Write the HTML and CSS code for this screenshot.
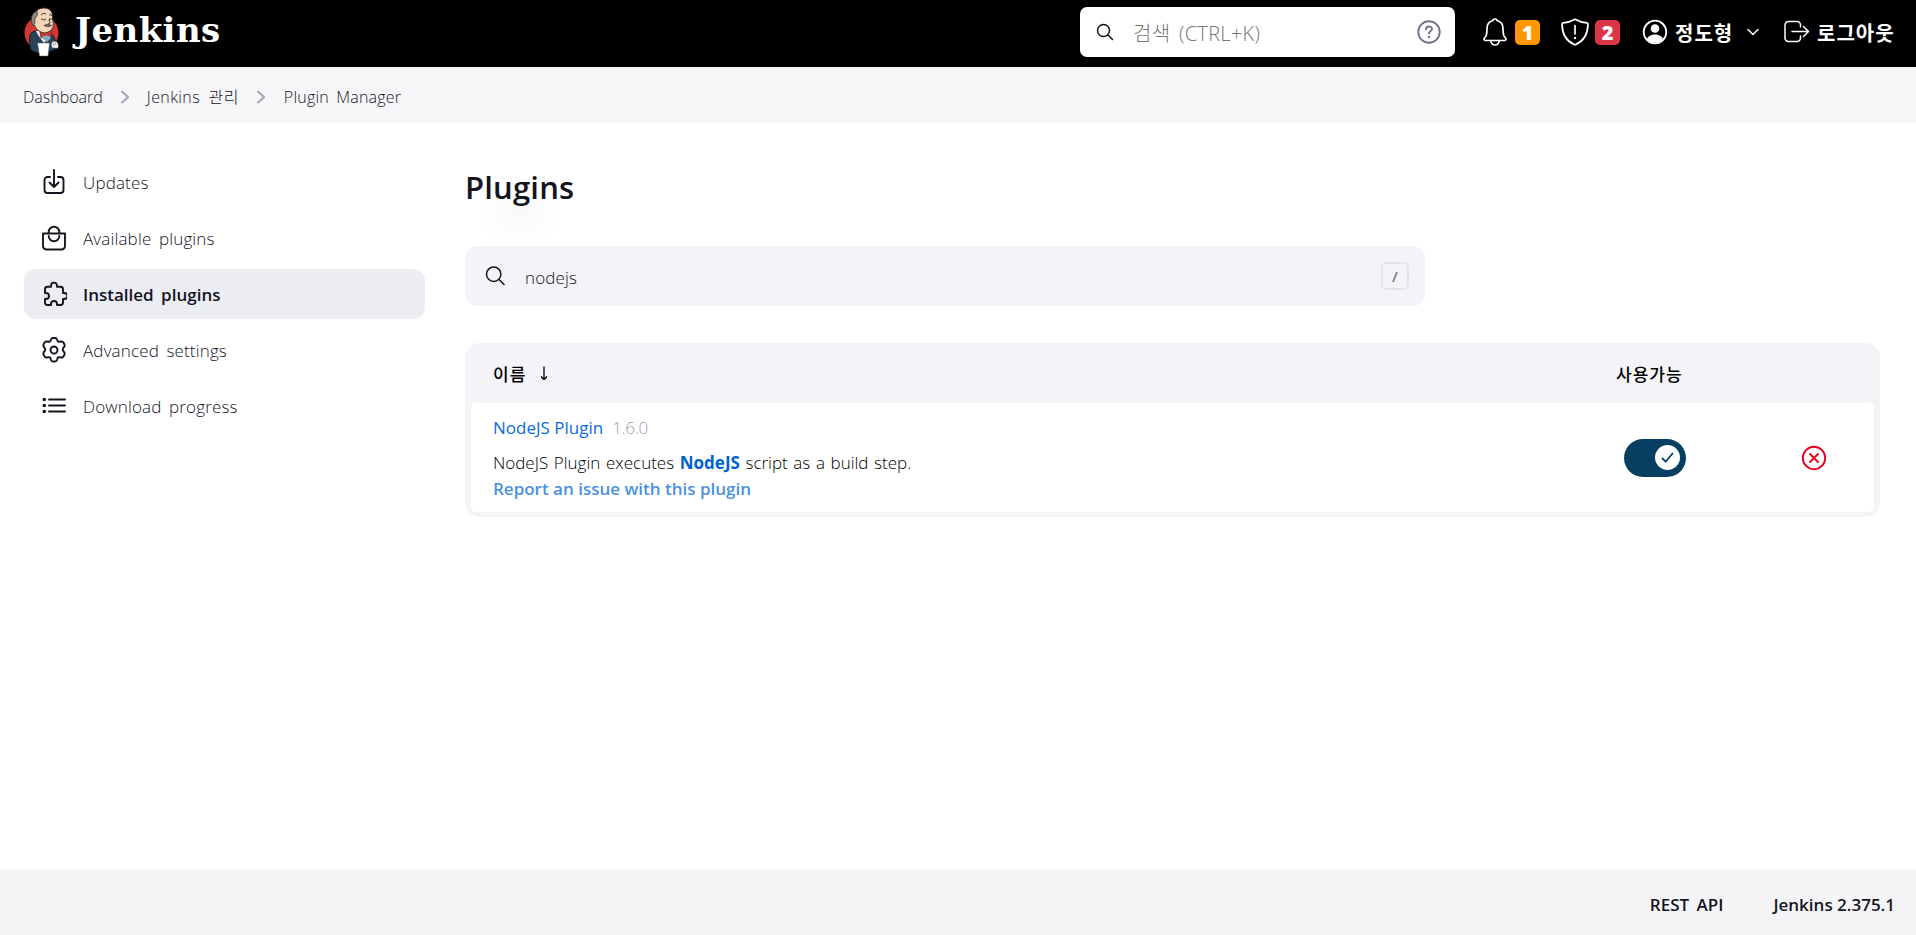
FILE: index.html
```html
<!DOCTYPE html>
<html lang="ko">
<head>
<meta charset="utf-8">
<title>Plugins - Jenkins</title>
<link rel="stylesheet" href="styles.css">
</head>
<body>
<header class="header">
  <a class="brand">
    <svg class="brand-logo" width="36" height="50" viewBox="0 0 36 50">
      <ellipse cx="17.500" cy="26" rx="17" ry="17" fill="#d33833"/>
      <path d="M7 26 C4 30 6 42 7.500 43 C12 47 25 46 31 42 L33 36 L28 27 L19 24 L11 24Z" fill="#284456" stroke="#172532" stroke-width="1"/>
      <path d="M12 24 L14 28 L20 36 L27 28 L25 23Z" fill="#f3f3ef"/>
      <path d="M9 11 C10 4 15 1 20 1 C27 1 29 6 28.500 12 C30.500 18 29 24 23 25.500 C18 27 12 23 11 19 C8 18 8 13 9 11Z" fill="#f0d6b7" stroke="#302b29" stroke-width=".9"/>
      <path d="M13 4 C7 6 6 13 9 19 C11 18 11 14 11 11 C13 10 14 7 13 4Z" fill="#8e8983" stroke="#302b29" stroke-width=".7"/>
      <path d="M17 8 Q19 5 22 7 M25 8 Q27 7 28 9 M17 12 Q20 14 22 12 M25 12 L28 12 M25 12 L26 16 L24 17" fill="none" stroke="#302b29" stroke-width=".9"/>
      <path d="M20 18.500 Q24 16 27.500 18.500 Q24 21 20 18.500Z" fill="#8e8983" stroke="#302b29" stroke-width=".8"/>
      <path d="M16 25 L21 27 L27 24 L27.500 29 L22 28 L17 31Z" fill="#d33833" stroke="#81201d" stroke-width=".8"/>
      <path d="M18 31 L23 35 L27 31 L25 29 L19 29Z" fill="#83aabd"/>
      <path d="M13.500 36 L25.500 36 L24 49 L15.500 49Z" fill="#fff" stroke="#53636b" stroke-width=".5"/>
      <path d="M27 38 C27 34 31 33 33 35 C35 37 35 41 33 41.500 L28 41Z" fill="#f3f3ef" stroke="#302b29" stroke-width=".7"/>
      <path d="M29 36 L30 39 M31 35 L32 38" stroke="#888" stroke-width=".7"/>
    </svg>
    <span class="brand-name">Jenkins</span>
  </a>
  <div class="top-search">
    <svg class="top-search-icon" width="18" height="18" viewBox="0 0 18 18" fill="none" stroke="#14141f" stroke-width="1.500" stroke-linecap="round"><circle cx="7.500" cy="7.500" r="6"/><path d="M12 12l4.500 4.500"/></svg>
    <span class="top-search-text">검색 (CTRL+K)</span>
    <svg width="24" height="24" viewBox="0 0 24 24" fill="none" stroke="#73738c" stroke-width="1.900"><circle cx="12" cy="12" r="10.700"/><path d="M9 9.500c0-4 6-4 6-.5 0 2-3 2.200-3 4.500" stroke-linecap="round"/><circle cx="12" cy="17" r="1.200" fill="#73738c" stroke="none"/></svg>
  </div>
  <a class="notice">
    <svg width="24" height="28" viewBox="0 0 24 28" fill="none" stroke="#fff" stroke-width="1.700" stroke-linejoin="round" stroke-linecap="round"><path d="M10 2.500c0-2 4-2 4 0 4 1 6 4 6 8 0 7 1 8 2.500 9.500 1 1.200.3 2.500-1 2.500h-19c-1.300 0-2-1.300-1-2.500C3 18.500 4 17.500 4 10.500c0-4 2-7 6-8Z"/><path d="M8 22.500v.5a4 4 0 0 0 8 0v-.5"/></svg>
    <span class="badge badge-orange">1</span>
  </a>
  <a class="notice notice-shield">
    <svg width="28" height="28" viewBox="0 0 28 28" fill="none" stroke="#fff" stroke-width="1.700" stroke-linejoin="round" stroke-linecap="round"><path d="M14 1.200c4 2.300 8 3.300 12 3.700 1 .1 1 .6 1 1.500-.3 10-4 16.500-12 20-1 .4-1 .4-2 0C5 22.900 1.300 16.400 1 6.400c0-.9 0-1.400 1-1.500C6 4.500 10 3.500 14 1.200Z"/><path d="M14 7.500v8.500"/><circle cx="14" cy="20" r="1.200" fill="#fff" stroke="none"/></svg>
    <span class="badge badge-red">2</span>
  </a>
  <a class="user">
    <svg width="26" height="26" viewBox="0 0 26 26"><circle cx="13" cy="13" r="11.300" fill="none" stroke="#fff" stroke-width="1.800"/><circle cx="13" cy="9.500" r="4.300" fill="#fff"/><path d="M5 20c2-6 14-6 16 0-4 5-12 5-16 0Z" fill="#fff"/></svg>
    <span class="user-name">정도형</span>
    <svg width="14" height="14" viewBox="0 0 14 14" fill="none" stroke="#fff" stroke-width="1.500" stroke-linecap="round" stroke-linejoin="round"><path d="M2 4.500l5 5 5-5"/></svg>
  </a>
  <a class="logout">
    <svg width="26" height="24" viewBox="0 0 26 24" fill="none" stroke="#fff" stroke-width="1.500" stroke-linecap="round" stroke-linejoin="round"><path d="M16.500 7V5a3.500 3.500 0 0 0-3.500-3.500H4.500A3.500 3.500 0 0 0 1 5v13a3.500 3.500 0 0 0 3.500 3.500H13a3.500 3.500 0 0 0 3.500-3.500v-2M8 11.500h16M19.500 6.500l5 5-5 5"/></svg>
    <span class="logout-text">로그아웃</span>
  </a>
</header>
<nav class="crumbs">
  <a class="crumb-dash">Dashboard</a>
  <svg width="10" height="16" viewBox="0 0 10 16" fill="none" stroke="#a5a5ba" stroke-width="2"><path d="M1.500 2l6.500 6-6.500 6"/></svg>
  <a class="crumb-manage">Jenkins 관리</a>
  <svg width="10" height="16" viewBox="0 0 10 16" fill="none" stroke="#a5a5ba" stroke-width="2"><path d="M1.500 2l6.500 6-6.500 6"/></svg>
  <a class="crumb-plugin">Plugin Manager</a>
</nav>
<div class="page">
  <aside class="side">
    <a class="task"><svg class="task-icon" viewBox="0 0 26 26"><path d="M9 8H6.500a3 3 0 0 0-3 3v10a3 3 0 0 0 3 3h13a3 3 0 0 0 3-3V11a3 3 0 0 0-3-3H17M13 1v17M8.500 13.500L13 18l4.500-4.500"/></svg><span>Updates</span></a>
    <a class="task"><svg class="task-icon" viewBox="0 0 26 26"><path d="M2 8.500h22V21a3.500 3.500 0 0 1-3.500 3.500h-15A3.500 3.500 0 0 1 2 21ZM7.700 8.500V7a5.300 5.300 0 0 1 10.600 0v1.500M7.700 11a5.300 5.300 0 0 0 10.600 0"/></svg><span>Available plugins</span></a>
    <a class="task task-active"><svg class="task-icon" viewBox="0 0 26 26"><path d="M10 5.800V5c0-4.500 6-4.500 6 0v.8h3.500a2.500 2.500 0 0 1 2.500 2.500V12h1c4.500 0 4.500 6 0 6h-1v3.500a2.500 2.500 0 0 1-2.500 2.500H16v-1c0-4-6-4-6 0v1H6.500A2.500 2.500 0 0 1 4 21.500V18h1c4 0 4-6 0-6H4V8.300a2.500 2.500 0 0 1 2.500-2.500Z"/></svg><span>Installed plugins</span></a>
    <a class="task"><svg class="task-icon" viewBox="0 0 26 26"><path d="M10 2.500q.5-1.500 2-1.500h2q1.500 0 2 1.500l.6 1.500q.5 1 1.800.8l1.800-.3q1.500-.2 2.200 1l1 1.700q.8 1.300-.1 2.500l-1.100 1.400q-.9 1.400 0 2.800l1.100 1.400q.9 1.200.1 2.500l-1 1.700q-.7 1.200-2.200 1l-1.800-.3q-1.300-.2-1.800.8l-.6 2q-.5 1.500-2 1.500h-2q-1.500 0-2-1.500l-.6-2q-.5-1-1.800-.8l-1.800.3q-1.500.2-2.200-1l-1-1.700q-.8-1.300.1-2.500l1.100-1.400q.9-1.400 0-2.800L2.700 9.700q-.9-1.200-.1-2.500l1-1.700q.7-1.200 2.200-1l1.800.3q1.300.2 1.800-.8Z"/><circle cx="13" cy="13" r="3.500"/></svg><span>Advanced settings</span></a>
    <a class="task"><svg class="task-icon" viewBox="0 0 26 26"><path d="M8 6.500h16M8 12.500h16M8 18.500h16"/><g fill="#14141f" stroke="none"><circle cx="3.300" cy="6.500" r="1.800"/><circle cx="3.300" cy="12.500" r="1.800"/><circle cx="3.300" cy="18.500" r="1.800"/></g></svg><span>Download progress</span></a>
  </aside>
  <main class="main">
    <h1 class="title">Plugins</h1>
    <div class="filter">
      <svg width="22" height="22" viewBox="0 0 22 22" fill="none" stroke="#14141f" stroke-width="1.500" stroke-linecap="round"><circle cx="8.700" cy="9.200" r="7.200"/><path d="M14 14.500l5 5"/></svg>
      <span class="filter-text">nodejs</span>
      <kbd class="key">/</kbd>
    </div>
    <section class="table">
      <div class="row head">
        <div class="head-name">이름<svg width="10" height="16" viewBox="0 0 10 16" fill="none" stroke="#000" stroke-width="1.300"><path d="M5 1.500v13M2 11.500l3 3 3-3"/></svg></div>
        <div class="head-enabled">사용가능</div>
        <div></div>
      </div>
      <div class="row body">
        <div class="info">
          <div class="plugin"><a class="plugin-link">NodeJS Plugin</a><span class="version">1.6.0</span></div>
          <div class="desc">NodeJS Plugin executes <b class="match">NodeJS</b> script as a build step.</div>
          <a class="report">Report an issue with this plugin</a>
        </div>
        <div class="toggle"><span class="knob"><svg width="25" height="25" viewBox="0 0 25 25" fill="none" stroke="#063f61" stroke-width="1.800" stroke-linecap="round" stroke-linejoin="round"><path d="M7.500 13.500l3.200 3.200 6.800-8.200"/></svg></span></div>
        <svg class="remove" width="26" height="26" viewBox="0 0 26 26" fill="none" stroke="#e6001f" stroke-width="1.900" stroke-linecap="round"><circle cx="13" cy="13" r="11.200"/><path d="M9 9l8 8M17 9l-8 8"/></svg>
      </div>
    </section>
  </main>
</div>
<footer class="footer"><a class="rest">REST API</a><a class="jver">Jenkins 2.375.1</a></footer>
</body>
</html>
```
FILE: styles.css
```css
* { box-sizing: border-box; }
body { margin: 0; height: 935px; display: flex; flex-direction: column; background: #fff; color: #14141f; font-family: "Open Sans", "Noto Sans CJK KR", sans-serif; font-size: 17px; white-space: nowrap; overflow: hidden; }
svg { display: block; flex: none; }
.header { height: 67px; flex: none; background: #000; display: flex; align-items: center; padding: 0 20px 3px 24px; color: #fff; }
.brand { display: flex; align-items: center; width: 1056px; }
.brand-name { font: bold 34px/50px "DejaVu Serif", serif; letter-spacing: .4px; margin: -4px 0 0 15px; }
.top-search { width: 375px; height: 50px; border-radius: 7px; background: #fff; display: flex; align-items: center; padding: 0 14px 0 16px; }
.top-search-text { flex: 1; margin-left: 19px; color: #757575; font-size: 20px; font-weight: 300; letter-spacing: .3px; word-spacing: 3px; }
.notice { display: flex; align-items: center; gap: 8px; margin-left: 28px; }
.notice-shield { margin-left: 21px; gap: 6px; }
.badge { width: 25px; height: 25px; border-radius: 5px; font-size: 20px; line-height: 26px; font-weight: 800; text-align: center; }
.badge-orange { background: #ff9800; }
.badge-red { background: #dc3545; }
.user { display: flex; align-items: center; margin-left: 22px; font-size: 20px; font-weight: 700; letter-spacing: 1px; }
.user-name { width: 59px; margin: 0 12px 0 7px; }
.logout { display: flex; align-items: center; margin-left: 24px; font-size: 20px; font-weight: 700; letter-spacing: 1px; }
.logout-text { margin-left: 7px; }
.crumbs { height: 56px; flex: none; background: #f6f6f8; display: flex; align-items: center; padding: 4px 23px 0; font-size: 16px; line-height: 24px; font-weight: 300; }
.crumbs svg { margin: 0 17px; }
.crumb-manage { letter-spacing: .4px; word-spacing: 4px; }
.crumb-plugin { margin-left: 1px; letter-spacing: .2px; word-spacing: 3px; }
.page { flex: 1; display: flex; padding: 34px 36px 0 24px; }
.side { width: 401px; display: flex; flex-direction: column; gap: 6px; }
.task { height: 50px; border-radius: 12px; display: flex; align-items: center; gap: 16px; padding-left: 17px; font-weight: 300; letter-spacing: .15px; word-spacing: 3px; }
.task-active { background: #ecedf3; font-weight: 600; letter-spacing: 0; }
.task-icon { width: 26px; height: 26px; fill: none; stroke: #14141f; stroke-width: 1.9; stroke-linecap: round; stroke-linejoin: round; }
.main { width: 1415px; margin-left: 40px; }
.title { margin: 8px 0 0; height: 81px; font-size: 31px; line-height: 44px; font-weight: 600; letter-spacing: .2px; background: radial-gradient(ellipse 42px 34px at 55px 48px, #f9f9f9, rgba(255,255,255,0)) no-repeat; }
.filter { width: 960px; height: 60px; border-radius: 12px; background: #f3f3f8; display: flex; align-items: center; padding: 0 16px 0 20px; font-weight: 300; }
.filter-text { flex: 1; margin-left: 18px; padding-top: 2px; letter-spacing: .15px; }
.key { width: 28px; height: 28px; border: 2px solid #e4e4f0; border-radius: 5px; font: 600 15px/24px "Open Sans", sans-serif; color: #73738c; text-align: center; }
.table { margin-top: 37px; height: 174px; border-radius: 15px; background: #f3f3f8; padding: 0 6px; }
.row { display: grid; grid-template-columns: 1120px 160px 123px; align-items: center; }
.head { height: 60px; font-size: 17px; font-weight: 500; color: #000; letter-spacing: 1px; }
.head-name { display: flex; align-items: center; gap: 13px; padding-left: 22px; }
.head-enabled { padding-left: 25px; }
.body { height: 109px; border-radius: 5px; background: #fff; }
.info { padding: 1px 0 0 22px; line-height: 26px; }
.plugin { display: flex; gap: 9px; height: 35px; align-items: flex-start; font-weight: 300; }
.plugin-link { color: #0b6cda; font-weight: 400; }
.version { color: #9a9aac; letter-spacing: -.3px; }
.desc { color: #000; font-weight: 300; word-spacing: 1.2px; }
.match { color: #0062cc; font-weight: 700; }
.report { display: block; color: #4b91df; font-weight: 600; }
.toggle { width: 62px; height: 38px; margin-left: 33px; border-radius: 19px; background: #063f61; display: flex; align-items: center; justify-content: flex-end; padding-right: 6px; }
.knob { width: 25px; height: 25px; border-radius: 50%; background: #fff; }
.remove { margin-left: 50px; }
.footer { height: 66px; flex: none; background: #f5f5f8; display: flex; align-items: center; justify-content: flex-end; gap: 50px; padding: 5px 21px 0 0; font-weight: 600; }
.rest { word-spacing: 3px; }
```
